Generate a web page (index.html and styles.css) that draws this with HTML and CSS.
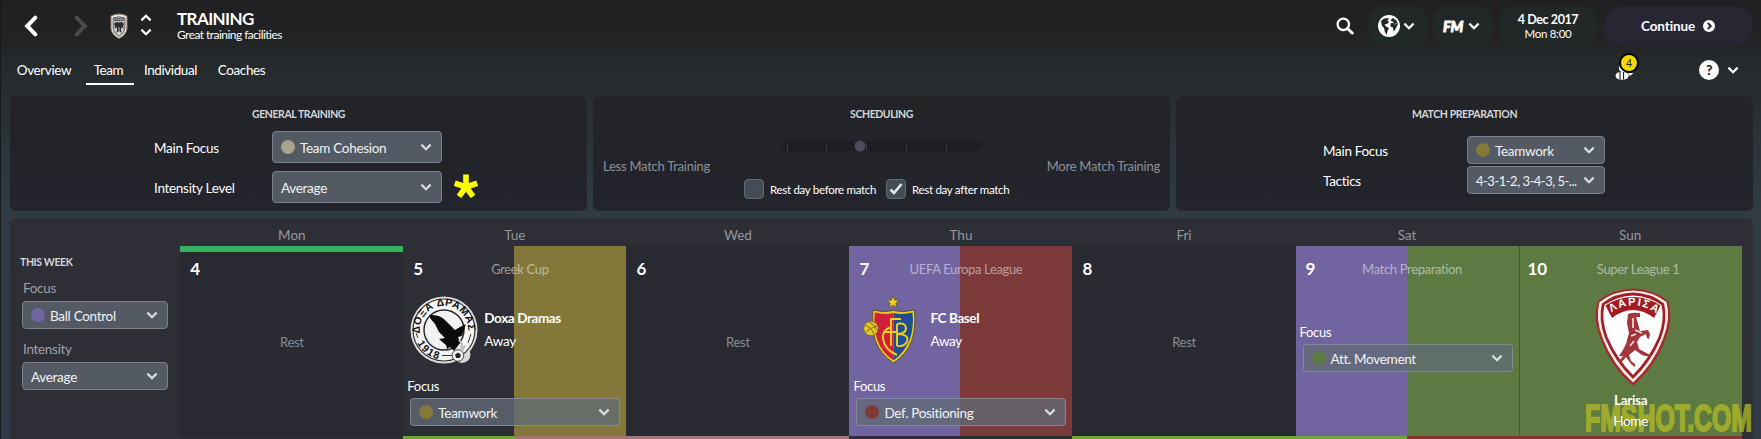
FILE: index.html
```html
<!DOCTYPE html>
<html lang="en">
<head>
  <meta charset="UTF-8" />
  <meta name="viewport" content="width=device-width, initial-scale=1.0"/>
  <title>Training</title>
  <link rel="stylesheet" href="styles.css">
</head>
<body>

  <!-- shared icons -->
  <svg class="sprite" width="0" height="0">
    <symbol id="chevron" viewBox="0 0 12 8">
      <path d="M1.4 1.6 L6 6.2 L10.6 1.6" fill="none" stroke="currentColor" stroke-width="2.2"/>
    </symbol>
    <symbol id="back" viewBox="0 0 14 22">
      <path d="M11.3 2.6 L3.2 11 L11.3 19.4" fill="none" stroke="currentColor" stroke-width="4" stroke-linecap="round"/>
    </symbol>
  </svg>

  <header class="topbar">
    <svg class="nav-back"><use href="#back"/></svg>
    <svg class="nav-forward"><use href="#back"/></svg>
    <svg class="club-badge" viewBox="0 0 18 26">
      <path d="M1 3 Q9 -1 17 3 V16 Q16 22 9 25.5 Q2 22 1 16 Z" fill="#e4e4e2" stroke="#8d7a55" stroke-width="1"/>
      <path d="M3.2 5 Q9 2.6 14.8 5 V16 Q14 20.500 9 23.300 Q4 20.500 3.200 16 Z" fill="#c4c4c2" stroke="#333" stroke-width=".7"/>
      <path d="M4 5.800 H14 M4.500 7.400 H13.500" stroke="#333" stroke-width="1.100" stroke-dasharray="1.600 .5"/>
      <path d="M9 9.500 L6 9 L4 11 L5 13 L4.500 16 L6.500 14 L7 17 L6 19.500 L9 18.500 L12 19.500 L11 17 L11.500 14 L13.500 16 L13 13 L14 11 L12 9 Z" fill="#2c2c2c"/>
      <path d="M6 15 V19 M9 14 V22 M12 15 V19" stroke="#eee" stroke-width=".7"/>
    </svg>
    <div class="switcher">
      <svg class="chev up"><use href="#chevron"/></svg>
      <svg class="chev"><use href="#chevron"/></svg>
    </div>
    <div class="heading">
      <h1>TRAINING</h1>
      <p>Great training facilities</p>
    </div>

    <div class="tools">
      <svg class="search" viewBox="0 0 18 18">
        <circle cx="7.300" cy="7.300" r="5.700" fill="none" stroke="#fff" stroke-width="2.300"/>
        <path d="M11.500 11.500 L16.200 16" stroke="#fff" stroke-width="3" stroke-linecap="round"/>
      </svg>
      <div class="pill world">
        <svg class="globe" viewBox="0 0 22 22">
          <circle cx="11" cy="11" r="11" fill="#fff"/>
          <path d="M3 6 L6 3.500 L11 3 L9.500 5.500 L11 7 L9 9 L6.500 9.500 L8 11.500 L11 13 L9.500 16 L8.500 20 L6.800 16.500 L6 13 L3.800 10.500 Z" fill="#222829"/>
          <path d="M12.500 5 L15 3 L18.500 5.500 L20 9 L18.500 12 L17 15 L15.500 16.500 L15 12.500 L12.500 11.500 L12.500 8.500 L15 7.500 Z" fill="#222829"/>
          <path d="M14 6.800 L16 8 M17 9.500 L18.500 8" stroke="#fff" stroke-width=".9"/>
        </svg>
        <svg class="chev"><use href="#chevron"/></svg>
      </div>
      <div class="pill fm">
        <span class="fm-logo">FM</span>
        <svg class="chev"><use href="#chevron"/></svg>
      </div>
      <div class="pill date">
        <strong>4 Dec 2017</strong>
        <span>Mon 8:00</span>
      </div>
      <button class="continue">
        <span>Continue</span>
        <svg viewBox="0 0 12 12">
          <circle cx="6" cy="6" r="6" fill="#fff"/>
          <path d="M4.800 3 L7.800 6 L4.800 9" fill="none" stroke="#262733" stroke-width="2"/>
        </svg>
      </button>
    </div>
  </header>

  <nav class="tabs">
    <a class="tab t-overview">Overview</a>
    <a class="tab t-team active">Team</a>
    <a class="tab t-individual">Individual</a>
    <a class="tab t-coaches">Coaches</a>
    <div class="tab-tools">
      <div class="bee">
        <svg viewBox="0 0 20 20">
          <circle cx="8" cy="8" r="4" fill="#fff"/>
          <path d="M0.500 15.500 Q1 11.500 7 12 Q13 11.500 14 15.500 Q13 19.800 7 19.800 Q1 19.800 .5 15.500 Z" fill="#fff"/>
          <path d="M5 12 V19.500 M8.500 12 V19.500" stroke="#25292c" stroke-width="1.200"/>
          <path d="M13 13 L18.500 13 L15 16 Z" fill="#fff"/>
        </svg>
        <span class="count">4</span>
      </div>
      <span class="help">?</span>
      <svg class="chev"><use href="#chevron"/></svg>
    </div>
  </nav>

  <section class="panels">
    <div class="panel general">
      <h2>GENERAL TRAINING</h2>
      <div class="row">
        <label>Main Focus</label>
        <div class="select"><i class="dot cohesion"></i><span>Team Cohesion</span><svg class="chev"><use href="#chevron"/></svg></div>
      </div>
      <div class="row">
        <label>Intensity Level</label>
        <div class="select"><span>Average</span><svg class="chev"><use href="#chevron"/></svg></div>
        <svg class="star" viewBox="0 0 24 24">
          <path d="M12 13 V0.500 M12 13 L.8 9.200 M12 13 L23.200 9.200 M12 13 L5 22.500 M12 13 L19 22.500" stroke="#ff0" stroke-width="5.600"/>
        </svg>
      </div>
    </div>

    <div class="panel scheduling">
      <h2>SCHEDULING</h2>
      <svg class="slider" viewBox="0 0 200 12">
        <rect x="0" y="1" width="200" height="10" rx="5" fill="#1d1e22"/>
        <path d="M5.500 4 V11 M44.500 4 V11 M84.500 4 V11 M124.500 4 V11 M164.500 4 V11" stroke="#3c3d43" stroke-width="1"/>
        <circle cx="78" cy="6" r="5.500" fill="#4c4a5c"/>
      </svg>
      <div class="range-labels">
        <span>Less Match Training</span>
        <span>More Match Training</span>
      </div>
      <div class="checks">
        <i class="box"></i><span>Rest day before match</span>
        <i class="box"><svg viewBox="0 0 14 14"><path d="M1.500 7.500 L5 11 L12.500 2" fill="none" stroke="#e6e7ea" stroke-width="2.600"/></svg></i><span>Rest day after match</span>
      </div>
    </div>

    <div class="panel preparation">
      <h2>MATCH PREPARATION</h2>
      <div class="row">
        <label>Main Focus</label>
        <div class="select"><i class="dot teamwork"></i><span>Teamwork</span><svg class="chev"><use href="#chevron"/></svg></div>
      </div>
      <div class="row">
        <label>Tactics</label>
        <div class="select"><span class="tactics">4-3-1-2, 3-4-3, 5-...</span><svg class="chev"><use href="#chevron"/></svg></div>
      </div>
    </div>
  </section>

  <section class="calendar">
    <aside class="week">
      <h2>THIS WEEK</h2>
      <label>Focus</label>
      <div class="select"><i class="dot ball"></i><span>Ball Control</span><svg class="chev"><use href="#chevron"/></svg></div>
      <label>Intensity</label>
      <div class="select"><span>Average</span><svg class="chev"><use href="#chevron"/></svg></div>
    </aside>

    <div class="days">
      <div class="day-name">Mon</div>
      <div class="day-name">Tue</div>
      <div class="day-name">Wed</div>
      <div class="day-name">Thu</div>
      <div class="day-name">Fri</div>
      <div class="day-name">Sat</div>
      <div class="day-name">Sun</div>

      <div class="day rest today">
        <b class="num">4</b>
        <p>Rest</p>
      </div>

      <div class="day split-teamwork">
        <b class="num">5</b>
        <span class="comp">Greek Cup</span>
        <div class="match">
          <svg class="crest" viewBox="0 0 68 68">
            <defs>
              <path id="ring-top" d="M11.300 42.300 A24.200 24.200 0 1 1 56.700 42.300"/>
              <path id="ring-bottom" d="M6.800 46 A29.500 29.500 0 0 0 31 63.400"/>
            </defs>
            <circle cx="52" cy="58.500" r="8.500" fill="#d8d8d8"/>
            <circle cx="34" cy="34" r="33.500" fill="#dededc"/>
            <circle cx="34" cy="34" r="31" fill="#f4f4f4" stroke="#333" stroke-width="1.200"/>
            <circle cx="34" cy="34" r="20" fill="#f2f2f2" stroke="#222" stroke-width="1.400"/>
            <text class="ring-text"><textPath href="#ring-top" startOffset="5" textLength="80">ΔΟΞΑ ΔΡΑΜΑΣ</textPath></text>
            <text class="ring-text"><textPath href="#ring-bottom" startOffset="1" textLength="27">1918</textPath></text>
            <path d="M6 37 L8 42 M32 59.500 H42 M61 38 L58 47" fill="none" stroke="#333" stroke-width="1"/>
            <path d="M20 19 Q30 18 36 25 L45 34 L50 31 L56 28 L53 37 L52 40 L48 41 L50 47 L44 55 L40 51 L37 53 L36 49 L29 43 L35 42 L29 36 L25 28 L20 22 Z" fill="#0b0b0b"/>
            <circle cx="48" cy="59.500" r="5.800" fill="#f2f2f2" stroke="#333" stroke-width=".9"/>
            <path d="M48 56.500 L51 58.700 L49.800 62 H46.200 L45 58.700 Z" fill="#222"/>
            <path d="M49 44 L52 48 L51 53 M55 49 L52 55" stroke="#bbb" stroke-width="2" fill="none"/>
          </svg>
          <div class="opponent"><strong>Doxa Dramas</strong><span>Away</span></div>
        </div>
        <label>Focus</label>
        <div class="select"><i class="dot teamwork"></i><span>Teamwork</span><svg class="chev"><use href="#chevron"/></svg></div>
      </div>

      <div class="day rest">
        <b class="num">6</b>
        <p>Rest</p>
      </div>

      <div class="day split-defence">
        <b class="num">7</b>
        <span class="comp">UEFA Europa League</span>
        <div class="match">
          <svg class="crest" viewBox="0 0 68 68">
            <path d="M37 0 L38.700 4.100 L43 4.400 L39.700 7.200 L40.800 11.500 L37 9.200 L33.200 11.500 L34.300 7.200 L31 4.400 L35.300 4.100 Z" fill="#f2d11a" stroke="#57451f" stroke-width=".6"/>
            <path d="M17 14 Q28 17 37.500 14.500 Q47 17 58.500 14 Q60 31 56 44 Q51 58 37.500 67 Q24 58 19 44 Q15 30 17 14 Z" fill="#eccb1e" stroke="#4e4122" stroke-width=".8"/>
            <path d="M19 16.500 Q28 19 37.500 17 V64.500 Q25 56 21 43 Q17 30 19 16.500 Z" fill="#d3203a"/>
            <path d="M37.500 17 Q47 19 56.500 16.500 Q58 31 54 43 Q49 56 37.500 64.500 Z" fill="#1f4f91"/>
            <path d="M45 23 H35 V50 M28 36 H40 M35 31 Q26 34 27 43 Q29 54 41 59 M41 28 V50 M41 28 Q50 26 50 33 Q49 38 41 38 Q52 38 51.500 44 Q50 51 41 50" fill="none" stroke="#f0d020" stroke-width="1.900"/>
            <circle cx="15" cy="32.500" r="7.300" fill="#e3c62a" stroke="#6b5a1c" stroke-width=".7"/>
            <path d="M9 29 Q15 31 18 38 M10 36 Q13 32 21 30 M13 26 Q18 28 21 34" fill="none" stroke="#7c6a1c" stroke-width="1"/>
          </svg>
          <div class="opponent"><strong>FC Basel</strong><span>Away</span></div>
        </div>
        <label>Focus</label>
        <div class="select"><i class="dot defence"></i><span>Def. Positioning</span><svg class="chev"><use href="#chevron"/></svg></div>
      </div>

      <div class="day rest">
        <b class="num">8</b>
        <p>Rest</p>
      </div>

      <div class="day split-attack">
        <b class="num">9</b>
        <span class="comp">Match Preparation</span>
        <label>Focus</label>
        <div class="select"><i class="dot attack"></i><span>Att. Movement</span><svg class="chev"><use href="#chevron"/></svg></div>
      </div>

      <div class="day full-attack">
        <b class="num">10</b>
        <span class="comp">Super League 1</span>
        <svg class="crest-large" viewBox="0 0 76 98">
          <defs><path id="arc" d="M14.500 25.500 Q38 9 61.500 25.500"/></defs>
          <path d="M38 .5 Q58 1 73 13 Q79 30 70 52 Q60 79 38 97.500 Q16 79 6 52 Q-3 30 3 13 Q18 1 38 .5 Z" fill="#a8282c"/>
          <path d="M38 2.500 Q57 3 71.500 14 Q76 31 68 51 Q58 77 38 94.500 Q18 77 8 51 Q0 31 4.500 14 Q19 3 38 2.500 Z" fill="#f4eded"/>
          <path d="M38 4.500 Q56 5 69 15.500 Q73 31 66 50 Q56 74 38 91 Q20 74 10 50 Q3 31 7 15.500 Q20 5 38 4.500 Z" fill="#a11d22"/>
          <path d="M38 7.500 Q54 8 66.500 17 Q70 31 63.500 49 Q54 71 38 87 Q22 71 12.500 49 Q6 31 9.500 17 Q22 8 38 7.500 Z" fill="#fff"/>
          <path d="M38 9 Q53 9 65.500 17.500 L59 30 Q38 14 17 30 L10.500 17.500 Q23 9 38 9 Z" fill="#a11d22"/>
          <text class="arc-text"><textPath href="#arc" startOffset="2" textLength="48">ΛΑΡΙΣΑ</textPath></text>
          <path d="M33 26 Q38 24 45 25 L45 29 L41 29 L43 36 L45 43 L53 42 L55 46 L54 51 L52 50 L51 46 L45 49 L42 54 L44 61 L55 67 L57 66 L55 69 L47 67 L40 62 L34 67 L36 73 L40 76 L40 79 L36 76 L31 69 L26 75 L24 73 L28 68 L24 68 L28 62 L31 56 L34 45 L32 35 Z" fill="#a3363a"/>
          <path d="M38 30 V40 M36 48 L41 46 M35 58 L39 53 M40 42 L47 45" stroke="#f6e7e6" stroke-width="1.600"/>
        </svg>
        <strong class="team">Larisa</strong>
        <span class="venue">Home</span>
        <svg class="watermark" viewBox="0 0 170 30">
          <text x="1" y="27.500" textLength="167" lengthAdjust="spacingAndGlyphs">FMSHOT.COM</text>
        </svg>
      </div>

      <div class="next-week">
        <i class="bar green"></i>
        <i class="bar pink"></i>
        <i class="bar none"></i>
        <i class="bar green wide"></i>
        <i class="bar red"></i>
      </div>
    </div>
  </section>

</body>
</html>
```
FILE: styles.css
```css
* {
  margin: 0;
  padding: 0;
  box-sizing: border-box;
}

body {
  width: 1761px;
  height: 439px;
  overflow: hidden;
  font-family: Lato, "Liberation Sans", sans-serif;
  font-size: 13.5px;
  line-height: 16px;
  letter-spacing: -0.3px;
  white-space: nowrap;
  color: #fff;
  background: linear-gradient(#202022 0, #222325 42px, #25292c 60px, #272d31 95px, #2c353b 155px, #303b43 215px, #303945 439px);
  border-left: 1px solid #17191c;
}

.sprite {
  position: absolute;
}

.chev {
  width: 12px;
  height: 8px;
  flex: none;
}

/* top bar */
.topbar {
  display: flex;
  align-items: center;
  height: 52px;
  padding: 0 8px 6px 23px;
}

.nav-back, .nav-forward {
  width: 14px;
  height: 22px;
  margin-top: 6px;
}

.nav-forward {
  margin-left: 36px;
  transform: scaleX(-1);
  color: #4b4b4d;
}

.club-badge {
  width: 18px;
  height: 26px;
  margin: 6px 0 0 22px;
}

.switcher {
  display: flex;
  flex-direction: column;
  gap: 6px;
  margin: 4px 0 0 12px;
}

.up {
  transform: scaleY(-1);
}

.heading {
  margin: 6px 0 0 25px;
}

.heading h1 {
  font-size: 17px;
  line-height: 17px;
  letter-spacing: -0.6px;
}

.heading p {
  font-size: 12px;
  line-height: 15px;
  letter-spacing: -0.55px;
}

.tools {
  display: flex;
  align-items: center;
  margin: 6px 0 0 auto;
}

.search {
  width: 18px;
  height: 18px;
  margin-right: 15px;
}

.pill {
  display: flex;
  align-items: center;
  height: 40px;
  border-radius: 14px;
  background: #222728;
}

.world {
  width: 58px;
  padding-left: 9px;
  gap: 3px;
  margin-right: 6px;
}

.globe {
  width: 22px;
  height: 22px;
}

.fm {
  width: 60px;
  padding-left: 10px;
  gap: 1px;
  margin-right: 6px;
}

.fm-logo {
  width: 24px;
  font: italic 900 14.5px Lato, sans-serif;
  -webkit-text-stroke: 0.8px #fff;
}

.date {
  width: 98px;
  flex-direction: column;
  justify-content: center;
  margin-right: 7px;
}

.date strong {
  font-size: 12.5px;
  line-height: 15px;
  letter-spacing: -0.4px;
}

.date span {
  font-size: 11.5px;
  line-height: 14px;
}

.continue {
  display: flex;
  align-items: center;
  width: 149px;
  height: 40px;
  padding-left: 37px;
  gap: 8px;
  border: none;
  border-radius: 20px;
  background: #262733;
  color: #fff;
  font: bold 13.5px Lato, sans-serif;
  letter-spacing: -0.1px;
}

.continue svg {
  width: 12px;
  height: 12px;
}

/* tabs */
.tabs {
  display: flex;
  height: 44px;
  padding: 8px 22px 0 9px;
}

.tab {
  height: 25px;
  padding: 2px 0 0;
  text-align: center;
  letter-spacing: -0.4px;
}

.t-overview {
  width: 68px;
}

.t-team {
  width: 48px;
  margin-left: 8px;
  text-indent: -3px;
}

.t-individual {
  width: 73px;
}

.t-coaches {
  width: 69px;
}

.active {
  border-bottom: 2px solid #fff;
}

.tab-tools {
  display: flex;
  align-items: flex-start;
  margin-left: auto;
}

.bee {
  position: relative;
  width: 20px;
  height: 20px;
  margin-right: 64px;
}

.bee svg {
  width: 20px;
  height: 20px;
}

.count {
  position: absolute;
  left: 4px;
  top: -7px;
  width: 20px;
  height: 20px;
  border: 2px solid #000;
  border-radius: 50%;
  background: #f0d800;
  color: #222;
  font-size: 10.5px;
  line-height: 16px;
  text-align: center;
}

.help {
  width: 20px;
  height: 20px;
  margin-right: 8px;
  border-radius: 50%;
  background: #fff;
  color: #25292c;
  font-weight: 900;
  font-size: 14px;
  line-height: 20px;
  text-align: center;
}

.tab-tools > .chev {
  margin-top: 6px;
}

/* settings panels */
.panels {
  display: flex;
  gap: 6px;
  height: 115px;
  padding: 0 8px 0 9px;
}

.panel {
  flex: 1;
  border-radius: 6px;
  background: linear-gradient(#222428, #23242c);
}

h2 {
  font-size: 10.5px;
  line-height: 14px;
  letter-spacing: -0.4px;
  color: #d4d5d8;
  text-align: center;
}

.panel h2 {
  padding-top: 11px;
  margin-bottom: 10px;
}

.row {
  display: flex;
  align-items: center;
}

.row label {
  margin-top: 2px;
}

.select {
  display: flex;
  align-items: center;
  height: 28px;
  padding: 0 9px 0 8px;
  border: 1px solid #7b828d;
  border-radius: 4px;
  background: #545a64;
  color: #f1f2f4;
}

.select span {
  padding-top: 1px;
}

.select .chev {
  margin-left: auto;
  color: #d9dce1;
}

.dot {
  width: 14px;
  height: 14px;
  margin-right: 5px;
  border-radius: 50%;
}

.cohesion {
  background: #aaa48d;
}

.teamwork {
  background: #837939;
}

.ball {
  background: #7164a2;
}

.defence {
  background: #7e3939;
}

.attack {
  background: #5c7a41;
}

.general .row {
  padding-left: 144px;
  margin-bottom: 8px;
}

.general label {
  width: 118px;
}

.general .select {
  width: 170px;
  height: 32px;
}

.star {
  width: 24px;
  height: 24px;
  margin: -2px 0 0 12px;
}

.slider {
  display: block;
  width: 200px;
  height: 12px;
  margin: 19px auto 1px;
}

.scheduling h2 {
  margin-bottom: 0;
}

.range-labels {
  display: flex;
  justify-content: space-between;
  padding: 0 10px;
  font-size: 13px;
  line-height: 26px;
  letter-spacing: -0.25px;
  color: #8e8f94;
}

.checks {
  display: flex;
  align-items: center;
  padding-left: 151px;
  font-size: 11.5px;
}

.box {
  display: flex;
  align-items: center;
  justify-content: center;
  width: 20px;
  height: 20px;
  margin-right: 6px;
  border: 1px solid #646b75;
  border-radius: 4px;
  background: #444c56;
}

.box svg {
  width: 14px;
  height: 14px;
}

.checks span {
  width: 116px;
  padding-top: 1px;
}

.preparation h2 {
  margin-bottom: 15px;
}

.preparation .row {
  padding-left: 147px;
  margin-bottom: 2px;
}

.preparation label {
  width: 144px;
}

.preparation .select {
  width: 138px;
}

.tactics {
  font-size: 13px;
  letter-spacing: -0.5px;
}

/* calendar */
.calendar {
  display: flex;
  height: 221px;
  margin: 7px 8px 0 9px;
  border-radius: 6px 6px 0 0;
  background: #2d2e36;
}

.week {
  width: 170.3px;
  padding: 37px 12px 0;
}

.week .select {
  width: 146px;
}

.week h2 {
  margin-left: -2px;
  text-align: left;
}

.week label {
  display: block;
  margin: 11px 0 5px 1px;
  color: #a0a1a6;
}

.week .select + label {
  margin-top: 12px;
}

.days {
  display: grid;
  grid-template-columns: repeat(7, 223.05px);
  grid-template-rows: 28px 190px 3px;
}

.day-name {
  padding-top: 9px;
  text-align: center;
  letter-spacing: 0;
  color: #96979c;
}

.day {
  position: relative;
  padding: 11px 7px 0;
}

.rest {
  background: #292a31;
}

.today {
  border-top: 6px solid #34b25c;
  padding-top: 5px;
}

.rest p {
  padding-top: 53px;
  text-align: center;
  font-size: 13px;
  color: #8a8b90;
}

.num {
  display: block;
  height: 24px;
  padding-left: 3px;
  font-size: 17px;
  line-height: 24px;
}

.comp {
  display: block;
  height: 24px;
  margin: -24px 0 0 10px;
  line-height: 24px;
  text-align: center;
  font-size: 13px;
  letter-spacing: -0.35px;
  color: rgba(255, 255, 255, 0.5);
}

.split-teamwork {
  background: linear-gradient(90deg, #2d2e36 50%, #837839 50%);
}

.split-defence {
  background: linear-gradient(90deg, #7164a1 50%, #7b3939 50%);
}

.split-attack {
  background: linear-gradient(90deg, #7164a1 50%, #5c7a41 50%);
}

.full-attack {
  background: #5c7a41;
  border-left: 1px solid #44592f;
  padding: 11px 0 0 5px;
}

.match {
  display: flex;
  gap: 6px;
  margin: 15px 0 14px;
}

.crest {
  width: 68px;
  height: 68px;
}

.ring-text {
  font: bold 10.5px "Liberation Sans", sans-serif;
  fill: #111;
}

.opponent {
  display: flex;
  flex-direction: column;
  gap: 7px;
  padding-top: 14px;
}

.opponent strong {
  letter-spacing: -0.4px;
}

.day label {
  display: block;
  margin: 0 0 4px -3px;
  font-size: 13px;
}

.day .select {
  width: 210px;
  border-color: rgba(160, 170, 180, 0.5);
  background: rgba(98, 106, 118, 0.78);
}

.split-attack label {
  margin-top: 43px;
}

.crest-large {
  display: block;
  width: 76px;
  height: 98px;
  margin: 7px auto 6px 70px;
}

.arc-text {
  font: bold 11px "Liberation Sans", sans-serif;
  fill: #fff;
}

.team, .venue {
  display: block;
  position: relative;
  z-index: 1;
  margin: 0 0 5px -5px;
  text-align: center;
}

.watermark {
  position: absolute;
  left: 64px;
  bottom: 3px;
  width: 170px;
  height: 30px;
}

.watermark text {
  font: bold 36px "Liberation Sans", sans-serif;
  letter-spacing: 0;
  fill: #b4ba24;
  stroke: #b4ba24;
  stroke-width: 2;
  opacity: 0.75;
}

/* top edge of the following week */
.next-week {
  grid-column: 1 / -1;
  display: flex;
  padding-left: 223px;
}

.bar {
  width: 112px;
}

.green {
  background: #69a63c;
}

.pink {
  width: 334px;
  background: #a9737c;
}

.none {
  width: 223px;
}

.wide {
  width: 335px;
}

.red {
  flex: 1;
  background: #803936;
}
```
